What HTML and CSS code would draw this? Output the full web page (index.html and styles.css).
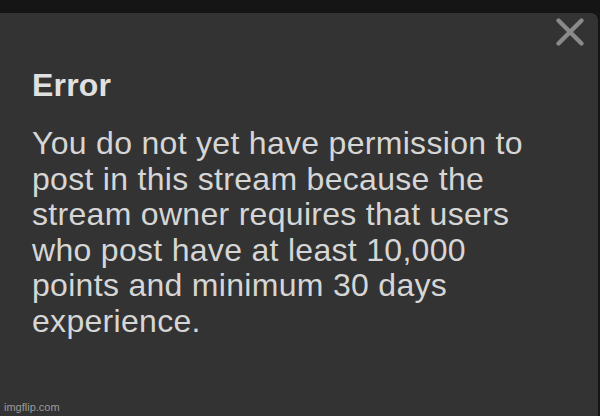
FILE: index.html
```html
<!DOCTYPE html>
<html>
<head>
<meta charset="utf-8">
<link rel="stylesheet" href="styles.css">
</head>
<body>
<div class="page">
  <div class="bar"></div>
  <div class="panel">
    <button class="close" aria-label="Close">
      <svg width="30" height="30" viewBox="0 0 30 30"><path d="M3.5 3.5 L26.5 26.5 M26.5 3.5 L3.5 26.5" stroke="#8a8a8a" stroke-width="4.4" stroke-linecap="round" fill="none"/></svg>
    </button>
    <h1 class="title">Error</h1>
    <p class="message">You do not yet have permission to<br>post in this stream because the<br>stream owner requires that users<br>who post have at least 10,000<br>points and minimum 30 days<br>experience.</p>
    <span class="watermark">imgflip.com</span>
  </div>
</div>
</body>
</html>
```
FILE: styles.css
```css
html, body {
  margin: 0;
  padding: 0;
  background: #151515;
}
.page {
  width: 600px;
  height: 416px;
  display: flex;
  flex-direction: column;
  background: #151515;
  font-family: "Liberation Sans", Arial, sans-serif;
}
.bar {
  height: 13px;
  flex: none;
}
.panel {
  position: relative;
  flex: 1;
  margin-right: 2px;
  background: #333333;
  border-radius: 0 7px 0 0;
  padding: 54px 0 0 32px;
  display: flex;
  flex-direction: column;
}
.close {
  position: absolute;
  top: 4px;
  right: 13px;
  width: 30px;
  height: 30px;
  padding: 0;
  border: 0;
  background: none;
}
.close svg { display: block; }
.title {
  margin: 0;
  font-size: 32px;
  line-height: 36px;
  font-weight: bold;
  color: #e0e0e0;
  letter-spacing: 0.2px;
}
.message {
  margin: 23px 0 0 0;
  font-size: 32px;
  line-height: 35.6px;
  color: #d6d6d6;
  letter-spacing: 0.3px;
}
.watermark {
  position: absolute;
  left: 4px;
  bottom: 3px;
  font-size: 11px;
  color: #9a9a9a;
}
```
